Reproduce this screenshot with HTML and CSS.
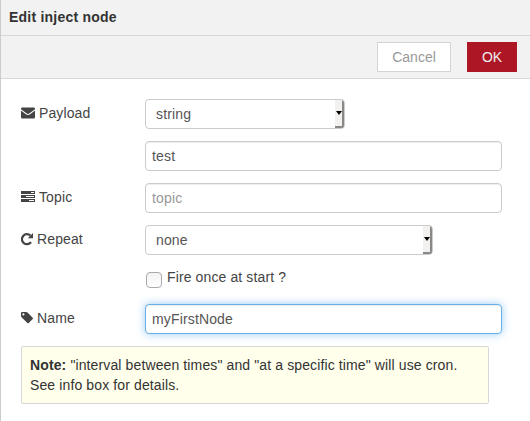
FILE: index.html
```html
<!DOCTYPE html>
<html lang="en">
<head>
<meta charset="utf-8">
<title>Edit inject node</title>
<link rel="stylesheet" href="styles.css">
</head>
<body>
<div class="editor">
  <header class="title">Edit inject node</header>
  <div class="toolbar">
    <button class="btn">Cancel</button>
    <button class="btn primary">OK</button>
  </div>
  <form class="form">
    <div class="row">
      <label class="label"><svg class="icon" width="14" height="14" viewBox="0 0 14 14"><path d="M0 3.2V2.6Q0 1.5 1.2 1.5H12.8Q14 1.5 14 2.6V3.2L8.6 7.3Q7 8.5 5.4 7.3ZM0 4.6L4.9 8.2Q7 9.7 9.1 8.2L14 4.6V11.3Q14 12.5 12.8 12.5H1.2Q0 12.5 0 11.3Z"/></svg>Payload</label>
      <div class="field select short"><span>string</span><i class="arrow"></i></div>
    </div>
    <div class="row indent"><input class="field" type="text" value="test"></div>
    <div class="row">
      <label class="label"><svg class="icon" width="14" height="14" viewBox="0 0 14 14"><path fill-rule="evenodd" d="M0 1H14V4H0ZM10 2V3H13V2ZM0 5H14V8H0ZM5 6V7H13V6ZM0 9H14V12H0ZM8 10V11H13V10Z"/></svg>Topic</label>
      <input class="field" type="text" placeholder="topic">
    </div>
    <div class="row">
      <label class="label"><svg class="icon" width="12" height="14" viewBox="0 0 12 14"><path d="M10 10.1A5 5 0 1 1 9.4 3.6" fill="none" stroke="#444" stroke-width="2.2"/><path d="M12 1V6.2H6.8Z"/></svg>Repeat</label>
      <div class="field select medium"><span>none</span><i class="arrow"></i></div>
    </div>
    <div class="row indent check-row"><span class="check"></span><label>Fire once at start ?</label></div>
    <div class="row">
      <label class="label"><svg class="icon" width="12" height="14" viewBox="0 0 12 14"><path fill-rule="evenodd" d="M0 2Q0 1 1 1H5Q6 1 6.8 1.8L11.7 6.7Q12.3 7.4 11.7 8.1L7.8 12Q7.1 12.6 6.4 12L.8 6.5Q0 5.7 0 4.8ZM2.4 2.3A1.1 1.1 0 1 0 2.4 4.5A1.1 1.1 0 1 0 2.4 2.3Z"/></svg>Name</label>
      <input class="field focused" type="text" value="myFirstNode">
    </div>
    <div class="note"><b>Note:</b> "interval between times" and "at a specific time" will use cron.<br>See info box for details.</div>
  </form>
</div>
</body>
</html>
```
FILE: styles.css
```css
* { box-sizing: border-box; }
body {
  margin: 0;
  background: #fff;
  color: #444;
  font: 14px/20px "Liberation Sans", Arial, sans-serif;
}
.editor { height: 421px; border-left: 1px solid #ccc; overflow: hidden; }
.title {
  height: 36px;
  padding: 7px 8px;
  background: #f2f2f2;
  border-bottom: 1px solid #d8d8d8;
  color: #333;
  font-weight: bold;
  letter-spacing: .22px;
}
.toolbar {
  display: flex;
  justify-content: flex-end;
  gap: 16px;
  height: 43px;
  padding: 6px 13px 0 0;
  background: #f2f2f2;
  border-bottom: 1px solid #d8d8d8;
}
.btn {
  width: 74px;
  height: 30px;
  padding: 0;
  border: 1px solid #d4d4d4;
  background: #fff;
  color: #999;
  font: inherit;
}
.btn.primary { width: 50px; border-color: #ad1625; background: #ad1625; color: #eee; }
.form { padding: 20px 28px 0 20px; letter-spacing: .12px; }
.row { display: flex; height: 30px; margin-bottom: 12px; }
.label { flex: none; width: 124px; padding-top: 4px; white-space: nowrap; }
.icon { margin-right: 4px; vertical-align: -2px; fill: #444; }
.indent { padding-left: 124px; }
.field {
  flex: 1;
  min-width: 0;
  height: 30px;
  margin: 0;
  padding: 4px 6px;
  border: 1px solid #ccc;
  border-radius: 4px;
  outline: 0;
  background: #fff;
  box-shadow: inset 0 1px 1px rgba(0, 0, 0, .075);
  color: #555;
  font: inherit;
  letter-spacing: .15px;
}
.field::placeholder { color: #999; opacity: 1; }
.focused {
  border-color: #66afe9;
  box-shadow: inset 0 1px 1px rgba(0, 0, 0, .075), 0 0 8px rgba(82, 168, 236, .6);
}
.select {
  display: flex;
  justify-content: space-between;
  flex: none;
  padding: 0 0 0 10px;
  box-shadow: none;
  line-height: 28px;
  overflow: hidden;
}
.short { width: 200px; }
.medium { width: 288px; }
.arrow {
  display: flex;
  align-items: center;
  justify-content: center;
  width: 9px;
  border: solid #888;
  border-width: 0 2px 2px 0;
  background: #f2f1f0;
}
.arrow::after {
  content: "";
  border: solid transparent;
  border-width: 4px 3px 0;
  border-top-color: #000;
}
.check-row { height: 25px; align-items: flex-start; color: #444; }
.check {
  width: 16px;
  height: 16px;
  margin: 5px 5px 0 1px;
  border: 1px solid #aaa;
  border-radius: 4px;
  background: linear-gradient(#f2f2f2, #fff);
}
.note {
  width: 468px;
  height: 58px;
  padding: 8px;
  border: 1px solid #d8d8d8;
  border-radius: 2px;
  background: #ffffec;
  color: #333;
}
```
